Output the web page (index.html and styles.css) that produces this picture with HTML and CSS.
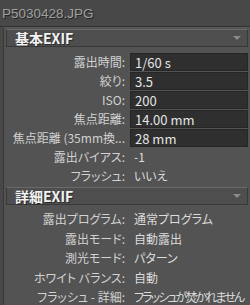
FILE: index.html
```html
<!DOCTYPE html>
<html lang="ja">
<head>
    <meta charset="UTF-8">
    <title>P5030428.JPG</title>
    <link rel="stylesheet" href="styles.css">
</head>
<body>
    <div class="window">
        <div class="title">P5030428.JPG</div>
        <div class="panel">
            <div class="section-head">
                <span class="section-name">基本EXIF</span>
                <span class="arrow"></span>
            </div>
            <div class="rows">
                <div class="row"><span class="label">露出時間:</span><span class="value boxed">1/60 s</span></div>
                <div class="row"><span class="label">絞り:</span><span class="value boxed">3.5</span></div>
                <div class="row"><span class="label">ISO:</span><span class="value boxed">200</span></div>
                <div class="row"><span class="label">焦点距離:</span><span class="value boxed">14.00 mm</span></div>
                <div class="row"><span class="label">焦点距離 (35mm換...</span><span class="value boxed">28 mm</span></div>
                <div class="row"><span class="label">露出バイアス:</span><span class="value">-1</span></div>
                <div class="row"><span class="label">フラッシュ:</span><span class="value">いいえ</span></div>
            </div>
            <div class="section-head">
                <span class="section-name">詳細EXIF</span>
                <span class="arrow"></span>
            </div>
            <div class="rows detail">
                <div class="row"><span class="label">露出プログラム:</span><span class="value">通常プログラム</span></div>
                <div class="row"><span class="label">露出モード:</span><span class="value">自動露出</span></div>
                <div class="row"><span class="label">測光モード:</span><span class="value">パターン</span></div>
                <div class="row"><span class="label">ホワイト バランス:</span><span class="value">自動</span></div>
                <div class="row"><span class="label">フラッシュ - 詳細:</span><span class="value small">フラッシュが焚かれません</span></div>
            </div>
        </div>
    </div>
</body>
</html>
```

FILE: styles.css
```css
body {
    margin: 0;
    padding: 0;
    background: #535353;
    font-family: 'Noto Sans CJK JP', 'Noto Sans', sans-serif;
    font-size: 12px;
    color: #d6d6d6;
    overflow: hidden;
}
.window {
    width: 250px;
    height: 305px;
    background: #484848;
}
.title {
    height: 26px;
    line-height: 28px;
    padding-left: 2px;
    font-family: 'Liberation Sans', sans-serif;
    font-size: 13.5px;
    color: #a0a0a0;
    text-shadow: 1px 1px 0 #262626;
    border-bottom: 1px solid #303030;
    white-space: nowrap;
}
.panel {
    margin-left: 3px;
    border-left: 1px solid #383838;
    border-top: 1px solid #5c5c5c;
    background: #535353;
    padding: 0 2px 0 2px;
    height: 278px;
}
.section-head {
    display: flex;
    align-items: center;
    justify-content: space-between;
    height: 16px;
    margin-top: 1px;
    border: 1px solid #383838;
    border-top-color: #6a6a6a;
    background: #4e4e4e;
    padding: 0 6px 0 8px;
}
.section-name {
    font-weight: bold;
    font-size: 14px;
    color: #f2f2f2;
    text-shadow: 1px 1px 0 #2a2a2a;
    line-height: 16px;
}
.arrow {
    width: 0;
    height: 0;
    border-left: 4px solid transparent;
    border-right: 4px solid transparent;
    border-top: 4px solid #8a8a8a;
}
.rows {
    padding: 5px 0 1px;
}
.rows.detail {
    padding-top: 4px;
}
.row {
    display: grid;
    grid-template-columns: 119px 1fr;
    column-gap: 5px;
    height: 19px;
    align-items: center;
}
.detail .row {
    height: 19.5px;
}
.label {
    text-align: right;
    white-space: nowrap;
    color: #d2d2d2;
    font-feature-settings: "palt" 1;
}
.value {
    padding-left: 4px;
    white-space: nowrap;
    color: #dcdcdc;
    font-feature-settings: "palt" 1;
}
.value.small {
    letter-spacing: -1.9px;
}
.boxed {
    height: 18px;
    line-height: 17px;
    background: #2f2f2f;
    border: 1px solid #262626;
    box-sizing: border-box;
    font-size: 13px;
    color: #e4e4e4;
}
```
